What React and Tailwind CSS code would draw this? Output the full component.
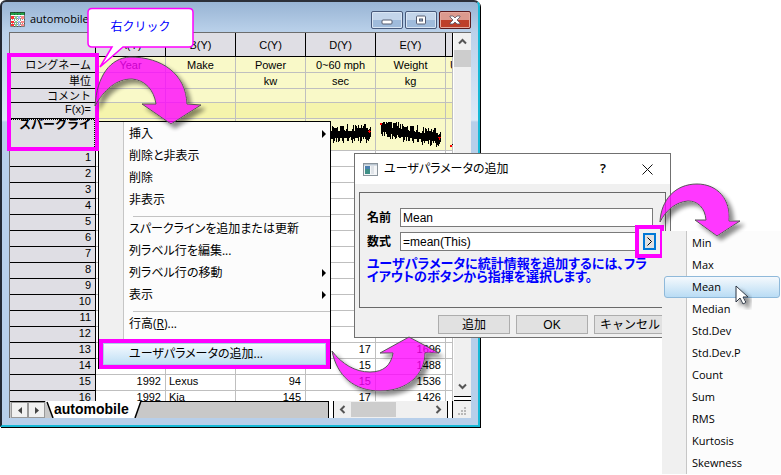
import React from "react";

const COLUMNS = [
  { id: "A(Y)", name: "Year", unit: "" },
  { id: "B(Y)", name: "Make", unit: "" },
  { id: "C(Y)", name: "Power", unit: "kw" },
  { id: "D(Y)", name: "0~60 mph", unit: "sec" },
  { id: "E(Y)", name: "Weight", unit: "kg" },
];

const EMPTY = ["", "", "", "", ""];

const ROWS = [
  EMPTY,
  EMPTY,
  EMPTY,
  EMPTY,
  EMPTY,
  EMPTY,
  EMPTY,
  EMPTY,
  EMPTY,
  EMPTY,
  EMPTY,
  EMPTY,
  ["", "", "", "17", "1696"],
  ["", "", "", "15", "1488"],
  ["1992", "Lexus", "94", "15", "1536"],
  ["1992", "Kia", "145", "17", "1426"],
];

const STATS = ["Min", "Max", "Mean", "Median", "Std.Dev", "Std.Dev.P", "Count", "Sum", "RMS", "Kurtosis", "Skewness"];

const GOTHIC = "font-['Liberation_Sans','Noto_Sans_CJK_JP',sans-serif]";
const MENU_FONT = "font-['Open_Sans','Noto_Sans_CJK_JP',sans-serif]";

function sparkPath(slope) {
  let seed = 7;
  let d = "";
  for (let i = 0; i < 60; i++) {
    seed = (seed * 1103 + 377) % 7919;
    const up = 3 + (seed % 8);
    seed = (seed * 1103 + 377) % 7919;
    const down = 3 + (seed % 7);
    const mid = 15 + slope * (i / 60 - 0.5);
    const top = Math.round(Math.max(3, mid - up));
    const bottom = Math.round(Math.min(28, mid + down));
    d += "M" + (5.5 + i) + " " + top + "V" + bottom;
  }
  return d;
}

function Sparkline({ slope, start }) {
  return (
    <svg className="block" width="69" height="31" viewBox="0 0 69 31" aria-hidden="true">
      <path d={sparkPath(slope)} fill="none" stroke="#000" strokeWidth="1" />
      <rect x="4" y={start} width="2" height="2" fill="#f00" />
      <path d={slope ? "M62 18.500h3M63.500 18v3" : "M62 12.500h3M63.500 11v3"} stroke="#f00" />
    </svg>
  );
}

const headCell = "border-b border-r border-black bg-[#dfdee4] p-0 font-normal";
const labelCell = "border-b border-r border-black bg-[#dfdee4] p-0 pr-1 text-right font-normal whitespace-nowrap";
const infoCell = "border-b border-r border-[#bfbfbf] p-0 text-center";

function Worksheet() {
  return (
    <table className="w-full table-fixed border-separate border-spacing-0 text-[11px] leading-[12px]">
      <colgroup>
        <col className="w-[86px]" />
        {COLUMNS.map((c) => (
          <col key={c.id} className="w-[70px]" />
        ))}
        <col />
      </colgroup>
      <thead>
        <tr className="h-[24px]">
          <th className={headCell} />
          {COLUMNS.map((c) => (
            <th key={c.id} className={headCell}>{c.id}</th>
          ))}
          <th className={headCell} />
        </tr>
      </thead>
      <tbody>
        <tr className="h-[16px] bg-[#f9f9c8]">
          <th className={labelCell}>ロングネーム</th>
          {COLUMNS.map((c) => (
            <td key={c.id} className={infoCell}>{c.name}</td>
          ))}
          <td className="overflow-hidden border-r border-b border-[#bfbfbf] p-0 pl-1 text-left">U</td>
        </tr>
        <tr className="h-[16px] bg-[#f9f9c8]">
          <th className={labelCell}>単位</th>
          {COLUMNS.map((c) => (
            <td key={c.id} className={infoCell}>{c.unit}</td>
          ))}
          <td className={infoCell} />
        </tr>
        <tr className="h-[14px] bg-[#f9f9c8]">
          <th className={labelCell}>コメント</th>
          {COLUMNS.map((c) => (
            <td key={c.id} className={infoCell} />
          ))}
          <td className={infoCell} />
        </tr>
        <tr className="h-[16px] bg-[#f5f4ac]">
          <th className={labelCell + " align-top"}>F(x)=</th>
          {COLUMNS.map((c) => (
            <td key={c.id} className={infoCell} />
          ))}
          <td className={infoCell} />
        </tr>
        <tr className="h-[32px] bg-[#f9f9c8]">
          <th className={labelCell + " align-top text-[12px]"}>
            <b>スパークライ</b>
          </th>
          <td className={infoCell} />
          <td className={infoCell} />
          <td className={infoCell} />
          <td className={infoCell}><Sparkline slope={0} start={14} /></td>
          <td className={infoCell}><Sparkline slope={11} start={4} /></td>
          <td className={infoCell}>
            <svg className="ml-1 block" width="3" height="31" viewBox="0 0 3 31" aria-hidden="true">
              <rect x="0" y="26" width="2" height="2" fill="#f00" />
              <rect x="2" y="25" width="1" height="1" fill="#000" />
            </svg>
          </td>
        </tr>
        {ROWS.map((row, r) => (
          <tr key={r} className="h-[16px] bg-white align-top">
            <th className={labelCell}>{r + 1}</th>
            {row.map((v, i) => (
              <td
                key={i}
                className={"border-b border-r border-[#bfbfbf] p-0 " + (i === 1 ? "pl-[3px] text-left" : "pr-1 text-right")}
              >
                {v}
              </td>
            ))}
            <td className={infoCell} />
          </tr>
        ))}
      </tbody>
    </table>
  );
}

function Chevron({ d }) {
  return (
    <svg width="9" height="9" viewBox="0 0 9 9" aria-hidden="true">
      <path d={d} fill="none" stroke="#555" strokeWidth="2" />
    </svg>
  );
}

const captionButton =
  "flex h-[18px] w-8 items-center justify-center rounded-[2px] border border-[#47597a] bg-linear-to-b from-[#c3d5ea] from-50% to-[#9fbbdb] to-50% shadow-[inset_0_0_0_1px_#d9e6f4]";

function SheetWindow() {
  return (
    <section className="w-[480px] rounded-t-md border-2 border-t-[#2b2f38] border-r-[#16b9d6] border-b-[#16b9d6] border-l-[#222833] bg-[linear-gradient(#98b4d4_0px,#bad1ea_30px,#dceaf8_118px,#b7cfea_120px)] pr-[7px] pb-[7px] pl-[7px] shadow-[1px_1px_0_#000]">
      <header className="flex h-[30px] items-center">
        <svg className="mt-1 mr-[5px] ml-px" width="15" height="15" viewBox="0 0 15 15" aria-hidden="true">
          <rect width="15" height="15" fill="#fff" />
          <rect width="15" height="3" fill="#23a34a" />
          <path d="M1 4h3v3H1zM1 9h3v2H1zM1 12h3v2H1z" fill="#f33" />
          <path d="M5 4h2v3H5zM5 9h2v2H5zM5 12h2v2H5z" fill="#7fd08f" />
          <path d="M8 4h2v3H8zM8 9h2v2H8zM8 12h2v2H8z" fill="#9db8f0" />
          <path d="M11 4h3v3h-3zM11 9h3v2h-3zM11 12h3v2h-3z" fill="#f88" />
          <path d="M.5.500h14v14H.500z" fill="none" stroke="#222" strokeWidth=".6" />
          <path d="M4.500 0v15M7.500 0v15M10.500 0v15M0 7.500h15M0 11.500h15" fill="none" stroke="#222" strokeWidth=".5" strokeDasharray="1 1" />
        </svg>
        <h1 className={"flex-1 pt-1 text-[11px] " + MENU_FONT}>automobile</h1>
        <div className="flex gap-0.5 pt-1.5">
          <button className={captionButton} aria-label="最小化">
            <svg width="12" height="12" viewBox="0 0 12 12"><rect x="1" y="6" width="10" height="4" rx="1" fill="#fff" stroke="#545c70" /></svg>
          </button>
          <button className={captionButton} aria-label="最大化">
            <svg width="12" height="12" viewBox="0 0 12 12"><rect x="1.500" y="2" width="9" height="8" rx="1" fill="#fff" stroke="#545c70" /><rect x="4.500" y="5" width="3" height="2" fill="#9fbbdb" stroke="#545c70" /></svg>
          </button>
          <button
            className="flex h-[18px] w-8 items-center justify-center rounded-[2px] border border-[#5a1a1d] bg-linear-to-b from-[#dc9a8e] from-50% to-[#bd3f2a] to-50% shadow-[inset_0_0_0_1px_#e4a99e]"
            aria-label="閉じる"
          >
            <svg width="12" height="10" viewBox="0 0 12 10"><path d="M1 1h3l2 2 2-2h3v1L8 5l3 3v1H8L6 7 4 9H1V8l3-3-3-3z" fill="#fff" stroke="#545060" strokeWidth=".8" /></svg>
          </button>
        </div>
      </header>
      <div className="border-t border-l border-[#6d6d6d] bg-white">
        <div className="flex h-[368px]">
          <div className="min-w-0 flex-1 overflow-hidden">
            <Worksheet />
          </div>
          <div className="flex w-[18px] flex-col border-l border-white bg-[#f0f0f0]">
            <div className="flex h-[17px] items-center justify-center"><Chevron d="M1 6.500l3.500-3.500L8 6.500" /></div>
            <div className="h-[17px] bg-[#cdcdcd]" />
            <div className="flex-1" />
            <div className="flex h-[17px] items-center justify-center"><Chevron d="M1 2.500L4.500 6 8 2.500" /></div>
            <div className="mt-px h-[5px] border-y border-black bg-white" />
          </div>
        </div>
        <footer className="flex h-[17px] bg-white">
          <div className="flex min-w-0 flex-1 border-t border-r border-black bg-[#c8c8c8]">
            <button className="ml-px flex w-[17px] items-center justify-center border border-[#999] bg-[#f0f0f0]" aria-label="前のシート">
              <svg width="4" height="7" viewBox="0 0 4 7"><path d="M4 0v7L0 3.500z" fill="#444" /></svg>
            </button>
            <button className="flex w-[17px] items-center justify-center border border-[#999] bg-[#f0f0f0]" aria-label="次のシート">
              <svg width="4" height="7" viewBox="0 0 4 7"><path d="M0 0v7l4-3.500z" fill="#444" /></svg>
            </button>
            <div className="-mt-px flex">
              <svg className="block" width="9" height="17" viewBox="0 0 9 17"><path d="M0 0h9v17H8z" fill="#fff" /><path d="M2 1l6 16" stroke="#000" strokeWidth="1.500" /></svg>
              <button className="bg-white pr-1 text-[14px] leading-[17px] font-bold">automobile</button>
              <svg className="block" width="9" height="17" viewBox="0 0 9 17"><path d="M0 0h8L2 17H0z" fill="#fff" /><path d="M8 0L2 17" stroke="#000" strokeWidth="1.500" /></svg>
            </div>
          </div>
          <div className="flex w-[119px] items-center border-l-4 border-white bg-[#f0f0f0]">
            <span className="h-full w-px bg-black" />
            <span className="flex w-[17px] justify-center"><Chevron d="M6.500 1L3 4.500 6.500 8" /></span>
            <span className="h-[15px] w-[45px] bg-[#cdcdcd]" />
            <span className="flex-1" />
            <span className="flex w-[17px] justify-center"><Chevron d="M2.500 1L6 4.500 2.500 8" /></span>
            <span className="h-full w-px bg-black" />
          </div>
          <div className="ml-1 flex w-[19px] items-end justify-end border-l border-black bg-[#f0f0f0] pr-1 pb-0.5">
            <svg width="9" height="9" viewBox="0 0 9 9"><path d="M6 0h2v2H6zM3 3h2v2H3zM6 3h2v2H6zM0 6h2v2H0zM3 6h2v2H3zM6 6h2v2H6z" fill="#b8b8b8" /></svg>
          </div>
        </footer>
      </div>
    </section>
  );
}

function MenuItem({ children, sub }) {
  return (
    <li>
      <button className="flex h-[22px] w-full items-center pr-1 pl-[30px] text-left whitespace-nowrap">
        <span className="flex-1">{children}</span>
        {sub && <svg width="4" height="8" viewBox="0 0 4 8"><path d="M0 0v8l4-4z" fill="#000" /></svg>}
      </button>
    </li>
  );
}

function Divider() {
  return <li className="mt-[5px] mb-px ml-[34px] h-px bg-[#c3c3c3]" role="separator" />;
}

function ContextMenu() {
  return (
    <div className={"absolute top-[121px] left-[98px] w-[233px] border border-b-0 border-black bg-[linear-gradient(to_right,#f0f0f0_24px,#c6c6c6_24px,#c6c6c6_25px,#fcfcfc_25px)] pt-px text-[12px] " + MENU_FONT}>
      <ul className="[font-feature-settings:'palt']">
        <MenuItem sub>挿入</MenuItem>
        <MenuItem>削除と非表示</MenuItem>
        <MenuItem>削除</MenuItem>
        <MenuItem>非表示</MenuItem>
        <Divider />
        <MenuItem>スパークラインを追加または更新</MenuItem>
        <MenuItem>列ラベル行を編集...</MenuItem>
        <MenuItem sub>列ラベル行の移動</MenuItem>
        <MenuItem sub>表示</MenuItem>
        <Divider />
        <MenuItem>行高(<u>R</u>)...</MenuItem>
        <li className="mt-1 border-4 border-[#ff00ff] bg-[#ff00ff]">
          <button className="flex h-[22px] w-full items-center border border-[#a9cfe8] bg-linear-to-b from-[#f6fafe] to-[#bfdff5] pl-[25px] text-left whitespace-nowrap">
            ユーザパラメータの追加...
          </button>
        </li>
      </ul>
    </div>
  );
}

const dialogButton = "h-[19px] w-[72px] border border-[#adadad] bg-[#e1e1e1] whitespace-nowrap";

function ParameterDialog() {
  return (
    <div role="dialog" aria-labelledby="dlg-title" className="absolute top-[153px] left-[354px] w-[317px] border border-[#707070] bg-[#f0f0f0] text-[12px]">
      <header className={"flex h-[30px] items-center bg-white pr-[17px] pl-2 " + MENU_FONT}>
        <svg className="mr-1.5" width="15" height="13" viewBox="0 0 15 13" aria-hidden="true">
          <rect x=".5" y=".5" width="14" height="12" fill="#f4f6f8" stroke="#8a949c" />
          <rect x="1" y="1" width="13" height="1.500" fill="#b8c4cf" />
          <rect x="2" y="3" width="5" height="8" fill="#3f8f86" />
          <rect x="2" y="3" width="5" height="3" fill="#4a7fb0" />
          <rect x="8" y="3" width="3" height="8" fill="#dfe3e8" />
        </svg>
        <h2 id="dlg-title" className="flex-1 [font-feature-settings:'palt']">ユーザパラメータの追加</h2>
        <button className="mr-9 text-[13px] font-semibold" aria-label="ヘルプ">?</button>
        <button aria-label="閉じる">
          <svg className="block" width="11" height="11" viewBox="0 0 11 11"><path d="M.5.500l10 10M10.500.500l-10 10" stroke="#111" /></svg>
        </button>
      </header>
      <div className="px-1 pt-2 pb-[3px]">
        <div className="h-[116px] border border-[#696969] px-[7px] pt-[15px]">
          <div className="flex items-center">
            <label htmlFor="param-name" className="w-[33px] font-bold">名前</label>
            <input id="param-name" defaultValue="Mean" className="h-[19px] w-[253px] border border-[#7a7a7a] bg-white px-0.5" />
          </div>
          <div className="mt-[5px] flex items-center">
            <label htmlFor="param-formula" className="w-[33px] font-bold">数式</label>
            <input id="param-formula" defaultValue="=mean(This)" className="h-[19px] w-[237px] border border-[#7a7a7a] bg-white px-0.5" />
            <button className="ml-[6px] flex h-[17px] w-[13px] items-center justify-center border-2 border-[#0078d7] bg-[#e1e1e1] outline-4 outline-offset-4 outline-[#ff00ff]" aria-label="統計量">
              <svg width="5" height="9" viewBox="0 0 5 9"><path d="M.5.500l4 4-4 4" fill="none" stroke="#000" /></svg>
            </button>
          </div>
          <p className="mt-1.5 text-[13px] leading-[13px] font-bold whitespace-nowrap text-[#0000ff] [font-feature-settings:'palt']">
            ユーザパラメータに統計情報を追加するには、フラ
            <br />
            イアウトのボタンから指揮を選択します。
          </p>
        </div>
        <div className="mt-[7px] flex justify-end gap-1.5">
          <button className={dialogButton}>追加</button>
          <button className={dialogButton}>OK</button>
          <button className={dialogButton}>キャンセル</button>
        </div>
      </div>
    </div>
  );
}

function Flyout() {
  return (
    <ul className={"absolute top-[231px] right-0 left-[662px] bg-[linear-gradient(to_right,#f0f0f0_24px,#c6c6c6_24px,#c6c6c6_25px,#fcfcfc_25px)] pt-px pr-px pl-0.5 text-[11px] " + MENU_FONT}>
      {STATS.map((s) => (
        <li key={s}>
          <button
            className={
              "h-[22px] w-full rounded-[3px] border pl-[27px] text-left " +
              (s === "Mean" ? "border-[#8fb9da] bg-linear-to-b from-[#f5f9fd] to-[#b9dcf4]" : "border-transparent")
            }
          >
            {s}
          </button>
        </li>
      ))}
    </ul>
  );
}

function Annotations() {
  return (
    <svg className="pointer-events-none absolute top-0 left-0" width="781" height="475" viewBox="0 0 781 475" aria-hidden="true">
      <defs>
        <filter id="shade" x="-20%" y="-20%" width="150%" height="150%" colorInterpolationFilters="sRGB">
          <feComponentTransfer in="SourceAlpha" result="solid">
            <feFuncA type="linear" slope="1.300" />
          </feComponentTransfer>
          <feOffset in="solid" dx="4" dy="4" />
          <feGaussianBlur stdDeviation="2" />
          <feComponentTransfer>
            <feFuncA type="linear" slope=".45" />
          </feComponentTransfer>
          <feComposite in2="solid" operator="out" result="outer" />
          <feMerge>
            <feMergeNode in="outer" />
            <feMergeNode in="SourceGraphic" />
          </feMerge>
        </filter>
      </defs>
      <path d="M96 119.500H11" stroke="#000" strokeDasharray="1 1" />
      <path d="M94.500 120v28" stroke="#000" strokeDasharray="1 1" />
      <rect x="9" y="55" width="88" height="94" fill="none" stroke="#f0f" strokeWidth="4" />
      <g fill="#ff00ff" fillOpacity=".78" stroke="#555" strokeWidth="1" filter="url(#shade)">
        <path d="M95 106C97 76 110 58 130 57C162 57 186 74 187 104L201 105L171 124L142 104H156C154 90 145 80 132 79C116 79 104 90 95 106Z" />
        <path d="M332 351C337 376 354 391 380 391C408 391 425 374 425 353H439L409 337L380 353H393C391 365 384 372 370 372C355 372 342 364 332 351Z" />
        <path d="M660 222C661 200 675 184 697 184C718 184 731 200 729 221H740L717 236L695 220H706C705 208 698 201 688 201C676 202 666 210 660 222Z" />
      </g>
      <path d="M92 8.500H189Q193 8.500 193 12.500V43Q193 47 189 47H123L100 67L112 47H92Q88 47 88 43V12.500Q88 8.500 92 8.500Z" fill="#fff" stroke="#f0f" strokeWidth="1.500" />
      <g transform="translate(735 285)">
        <path d="M1 1v16l4-4 3 6 3-1.500-3-5.500h5z" fill="#fff" stroke="#2a3340" strokeWidth="1" filter="url(#shade)" />
      </g>
    </svg>
  );
}

export default function App() {
  return (
    <main className={"relative min-h-screen overflow-hidden bg-white text-[#000] " + GOTHIC}>
      <SheetWindow />
      <ContextMenu />
      <ParameterDialog />
      <Flyout />
      <Annotations />
      <p className="absolute top-[18px] left-[88px] w-[105px] text-center text-[12px] leading-[18px] text-[#0000ff]">右クリック</p>
    </main>
  );
}
